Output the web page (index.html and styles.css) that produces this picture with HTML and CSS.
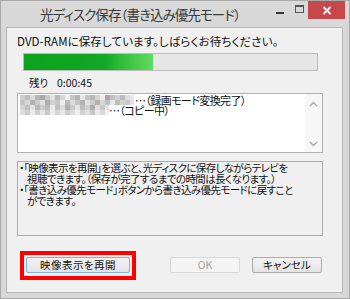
FILE: index.html
```html
<!DOCTYPE html>
<html lang="ja">
<head>
<meta charset="utf-8">
<link rel="stylesheet" href="styles.css">
</head>
<body>
<div class="window">
  <div class="titlebar">
    <div class="title">光ディスク保存（書き込み優先モード）</div>
    <div class="caption">
      <div class="cap-btn cap-min"><span class="min-bar"></span></div>
      <div class="cap-btn cap-max"><span class="max-box"></span></div>
      <div class="cap-btn cap-close">
        <svg width="10" height="9" viewBox="0 0 10 9"><path d="M1.5 1L8.5 8M8.5 1L1.5 8" stroke="#fff" stroke-width="1.8"/></svg>
      </div>
    </div>
  </div>
  <div class="client">
    <div class="msg">DVD-RAMに保存しています。しばらくお待ちください。</div>
    <div class="progress"><div class="progress-fill" style="width:129px"></div></div>
    <div class="remain"><span class="remain-label">残り</span><span class="remain-time">0:00:45</span></div>
    <div class="listbox">
      <div class="list-items">
        <svg class="blur" width="114" height="20" viewBox="0 0 114 20">
          <g shape-rendering="crispEdges">
          <rect x="0" y="0" width="5" height="5" fill="#cfcfcf"/><rect x="5" y="0" width="5" height="5" fill="#bdbdbd"/><rect x="10" y="0" width="5" height="5" fill="#d9d9d9"/><rect x="15" y="0" width="5" height="5" fill="#b5b5b5"/><rect x="20" y="0" width="5" height="5" fill="#a9a9a9"/><rect x="25" y="0" width="5" height="5" fill="#c8c8c8"/><rect x="30" y="0" width="5" height="5" fill="#e4e4e4"/><rect x="35" y="0" width="5" height="5" fill="#b9b9b9"/><rect x="40" y="0" width="5" height="5" fill="#d6d6d6"/><rect x="45" y="0" width="5" height="5" fill="#eeeeee"/><rect x="50" y="0" width="5" height="5" fill="#c6c6c6"/><rect x="55" y="0" width="5" height="5" fill="#b3b3b3"/><rect x="60" y="0" width="5" height="5" fill="#e6e6e6"/><rect x="65" y="0" width="5" height="5" fill="#c4c4c4"/><rect x="70" y="0" width="5" height="5" fill="#b8b8b8"/><rect x="75" y="0" width="5" height="5" fill="#d4d4d4"/><rect x="80" y="0" width="5" height="5" fill="#ececec"/><rect x="85" y="0" width="5" height="5" fill="#a7a7a7"/><rect x="90" y="0" width="5" height="5" fill="#c2c2c2"/><rect x="95" y="0" width="5" height="5" fill="#d0d0d0"/><rect x="100" y="0" width="5" height="5" fill="#bebebe"/><rect x="105" y="0" width="5" height="5" fill="#dedede"/><rect x="110" y="0" width="4" height="5" fill="#e8e8e8"/>
          <rect x="0" y="5" width="5" height="5" fill="#c3c3c3"/><rect x="5" y="5" width="5" height="5" fill="#d7d7d7"/><rect x="10" y="5" width="5" height="5" fill="#b0b0b0"/><rect x="15" y="5" width="5" height="5" fill="#cbcbcb"/><rect x="20" y="5" width="5" height="5" fill="#e0e0e0"/><rect x="25" y="5" width="5" height="5" fill="#afafaf"/><rect x="30" y="5" width="5" height="5" fill="#d2d2d2"/><rect x="35" y="5" width="5" height="5" fill="#c7c7c7"/><rect x="40" y="5" width="5" height="5" fill="#ebebeb"/><rect x="45" y="5" width="5" height="5" fill="#bababa"/><rect x="50" y="5" width="5" height="5" fill="#dadada"/><rect x="55" y="5" width="5" height="5" fill="#c5c5c5"/><rect x="60" y="5" width="5" height="5" fill="#b4b4b4"/><rect x="65" y="5" width="5" height="5" fill="#e3e3e3"/><rect x="70" y="5" width="5" height="5" fill="#cdcdcd"/><rect x="75" y="5" width="5" height="5" fill="#b2b2b2"/><rect x="80" y="5" width="5" height="5" fill="#d8d8d8"/><rect x="85" y="5" width="5" height="5" fill="#c0c0c0"/><rect x="90" y="5" width="5" height="5" fill="#e7e7e7"/><rect x="95" y="5" width="5" height="5" fill="#bcbcbc"/><rect x="100" y="5" width="5" height="5" fill="#d3d3d3"/><rect x="105" y="5" width="5" height="5" fill="#c9c9c9"/><rect x="110" y="5" width="4" height="5" fill="#e2e2e2"/>
          <rect x="0" y="10" width="5" height="5" fill="#d4d4d4"/><rect x="5" y="10" width="5" height="5" fill="#c0c0c0"/><rect x="10" y="10" width="5" height="5" fill="#e2e2e2"/><rect x="15" y="10" width="5" height="5" fill="#b6b6b6"/><rect x="20" y="10" width="5" height="5" fill="#cecece"/><rect x="25" y="10" width="5" height="5" fill="#bbbbbb"/><rect x="30" y="10" width="5" height="5" fill="#e9e9e9"/><rect x="35" y="10" width="5" height="5" fill="#c1c1c1"/><rect x="40" y="10" width="5" height="5" fill="#dcdcdc"/><rect x="45" y="10" width="5" height="5" fill="#b1b1b1"/><rect x="50" y="10" width="5" height="5" fill="#cacaca"/><rect x="55" y="10" width="5" height="5" fill="#e5e5e5"/><rect x="60" y="10" width="5" height="5" fill="#bfbfbf"/><rect x="65" y="10" width="5" height="5" fill="#d1d1d1"/><rect x="70" y="10" width="5" height="5" fill="#adadad"/><rect x="75" y="10" width="5" height="5" fill="#dfdfdf"/><rect x="80" y="10" width="5" height="5" fill="#c8c8c8"/><rect x="85" y="10" width="4" height="5" fill="#e4e4e4"/>
          <rect x="0" y="15" width="5" height="5" fill="#dedede"/><rect x="5" y="15" width="5" height="5" fill="#cccccc"/><rect x="10" y="15" width="5" height="5" fill="#ececec"/><rect x="15" y="15" width="5" height="5" fill="#d0d0d0"/><rect x="20" y="15" width="5" height="5" fill="#e6e6e6"/><rect x="25" y="15" width="5" height="5" fill="#c9c9c9"/><rect x="30" y="15" width="5" height="5" fill="#eeeeee"/><rect x="35" y="15" width="5" height="5" fill="#d5d5d5"/><rect x="40" y="15" width="5" height="5" fill="#e8e8e8"/><rect x="45" y="15" width="5" height="5" fill="#cbcbcb"/><rect x="50" y="15" width="5" height="5" fill="#dbdbdb"/><rect x="55" y="15" width="5" height="5" fill="#efefef"/><rect x="60" y="15" width="5" height="5" fill="#d2d2d2"/><rect x="65" y="15" width="5" height="5" fill="#e1e1e1"/><rect x="70" y="15" width="5" height="5" fill="#c7c7c7"/><rect x="75" y="15" width="5" height="5" fill="#ebebeb"/><rect x="80" y="15" width="5" height="5" fill="#d9d9d9"/><rect x="85" y="15" width="4" height="5" fill="#f0f0f0"/>
          </g>
        </svg>
        <div class="item item1">…（録画モード変換完了）</div>
        <div class="item item2">…（コピー中）</div>
      </div>
      <div class="vscroll">
        <svg width="9" height="6" viewBox="0 0 9 6"><path d="M1 5L4.5 1.5L8 5" fill="none" stroke="#a8a8a8" stroke-width="1.4"/></svg>
        <svg width="9" height="6" viewBox="0 0 9 6"><path d="M1 1L4.5 4.5L8 1" fill="none" stroke="#a8a8a8" stroke-width="1.4"/></svg>
      </div>
    </div>
    <div class="info">
      <p>・「映像表示を再開」を選ぶと、光ディスクに保存しながらテレビを</p>
      <p class="indent">視聴できます。（保存が完了するまでの時間は長くなります。）</p>
      <p>・「書き込み優先モード」ボタンから書き込み優先モードに戻すこと</p>
      <p class="indent">ができます。</p>
    </div>
    <div class="buttons">
      <div class="highlight"><div class="btn btn-focus">映像表示を再開</div></div>
      <div class="btn btn-disabled">OK</div>
      <div class="btn">キャンセル</div>
    </div>
  </div>
</div>
</body>
</html>
```
FILE: styles.css
```css
* { box-sizing: border-box; }
html, body { margin: 0; padding: 0; }
body {
  width: 350px;
  height: 299px;
  background: #fff;
  font-family: "Noto Sans CJK JP", "Noto Sans", sans-serif;
  font-feature-settings: "palt";
  color: #1a1a1a;
}
.window {
  width: 350px;
  height: 299px;
  background: #d8d8d8;
  border: 1px solid #a9a9a9;
  display: flex;
  flex-direction: column;
}
.titlebar {
  height: 26px;
  display: flex;
  align-items: flex-start;
  justify-content: space-between;
  flex-shrink: 0;
}
.title {
  margin-left: 39px;
  margin-top: 3px;
  font-size: 13.5px;
  line-height: 20px;
  color: #3a3a3a;
  letter-spacing: -0.9px;
}
.caption {
  display: flex;
  margin-right: 4px;
}
.cap-btn {
  height: 18px;
  display: flex;
  align-items: center;
  justify-content: center;
}
.cap-min { width: 20px; }
.min-bar {
  display: block;
  width: 8px;
  height: 2px;
  background: #333;
  margin-top: 5px;
}
.cap-max { width: 18px; }
.max-box {
  display: block;
  width: 9px;
  height: 8px;
  border: 1px solid #555;
  border-top-width: 2px;
  margin-top: -3px;
}
.cap-close {
  width: 37px;
  background: #c7484a;
}
.client {
  margin-left: 5px;
  width: 337px;
  height: 266px;
  background: #f0f0f0;
  border: 1px solid #b6b6b6;
  padding: 7px 0 0 10px;
  display: flex;
  flex-direction: column;
}
.msg {
  font-size: 11.5px;
  line-height: 12px;
  height: 12px;
  color: #111;
  letter-spacing: 0.1px;
}
.progress {
  margin: 6px 0 0 6px;
  width: 295px;
  height: 18px;
  background: #e6e6e6;
  border: 1px solid #bcbcbc;
  padding: 0;
}
.progress-fill {
  height: 16px;
  background: linear-gradient(to right, #0ba31d 0%, #12a725 62%, #3cc23f 80%, #62da62 100%);
}
.remain {
  margin: 6px 0 0 12px;
  height: 11px;
  font-size: 10.5px;
  line-height: 11px;
  display: flex;
  color: #111;
}
.remain-label { width: 28px; }
.listbox {
  margin-top: 5px;
  width: 306px;
  height: 60px;
  background: #fff;
  border: 1px solid #b0b0b0;
  display: flex;
}
.list-items {
  flex: 1;
  display: flex;
  flex-direction: column;
  padding: 1px 0 0 2px;
  position: relative;
}
.blur {
  display: block;
}
.item {
  position: absolute;
  font-size: 11px;
  line-height: 10px;
  color: #111;
  white-space: nowrap;
  letter-spacing: -0.6px;
}
.item1 { left: 117px; top: 1px; }
.item2 { left: 91px; top: 11px; }
.vscroll {
  width: 17px;
  display: flex;
  flex-direction: column;
  justify-content: space-between;
  align-items: center;
  padding: 7px 0 5px;
  background: #f7f7f7;
}
.vscroll svg { display: block; }
.info {
  margin-top: 8px;
  width: 306px;
  height: 75px;
  background: #f0f0f0;
  border: 1px solid #adadad;
  padding: 0 0 0 1px;
}
.info p {
  margin: 0;
  font-size: 10.5px;
  line-height: 11px;
  color: #111;
  white-space: nowrap;
  letter-spacing: -0.6px;
}
.info p.indent { padding-left: 8px; }
.buttons {
  margin-top: 15px;
  display: flex;
  align-items: flex-start;
  padding-left: 3px;
}
.highlight {
  border: 4px solid #ff0000;
  padding: 2px 2px 3px;
  width: 116px;
  height: 29px;
}
.btn {
  width: 70px;
  height: 16px;
  font-size: 10.5px;
  line-height: 14px;
  text-align: center;
  color: #111;
  background: linear-gradient(#f3f3f3, #e4e4e4);
  border: 1px solid #acacac;
  border-radius: 2px;
  margin-top: 6px;
}
.highlight .btn {
  margin-top: 0;
  width: 104px;
}
.btn-focus {
  border-color: #7eb4ea;
  letter-spacing: 0.5px;
}
.btn-disabled {
  margin-left: 34px;
  background: #f4f4f4;
  border-color: #d9d9d9;
  color: #a3a3a3;
}
.btn-disabled + .btn { margin-left: 12px; }
```
